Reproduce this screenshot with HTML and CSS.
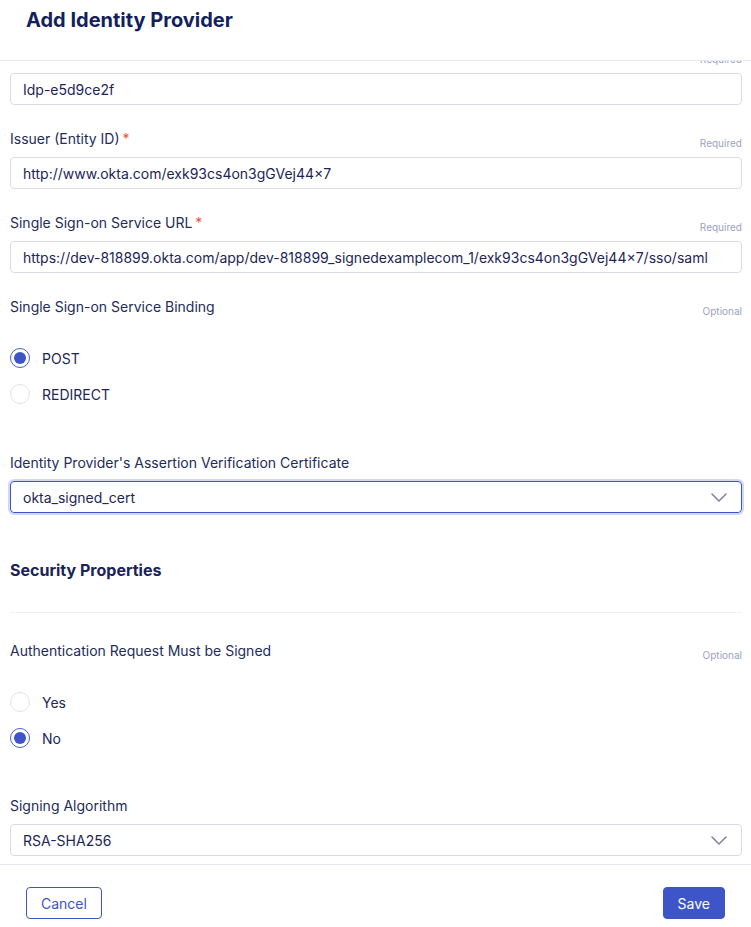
FILE: index.html
```html
<!DOCTYPE html>
<html lang="en">
<head>
<meta charset="utf-8">
<title>Add Identity Provider</title>
<link rel="stylesheet" href="styles.css">
</head>
<body>
<div class="modal">
  <header class="modal-header">
    <h1 class="title">Add Identity Provider</h1>
  </header>
  <main class="modal-body">
    <div class="scroll-content">
      <div class="field">
        <div class="field-head">
          <label class="label">Name<span class="req">*</span></label>
          <span class="hint">Required</span>
        </div>
        <div class="input">Idp-e5d9ce2f</div>
      </div>

      <div class="field">
        <div class="field-head">
          <label class="label">Issuer (Entity ID)<span class="req">*</span></label>
          <span class="hint">Required</span>
        </div>
        <div class="input">http://www.okta.com/exk93cs4on3gGVej44x7</div>
      </div>

      <div class="field">
        <div class="field-head">
          <label class="label">Single Sign-on Service URL<span class="req">*</span></label>
          <span class="hint">Required</span>
        </div>
        <div class="input">https://dev-818899.okta.com/app/dev-818899_signedexamplecom_1/exk93cs4on3gGVej44x7/sso/saml</div>
      </div>

      <div class="field">
        <div class="field-head">
          <label class="label">Single Sign-on Service Binding</label>
          <span class="hint">Optional</span>
        </div>
        <div class="radio-group">
          <div class="radio-row"><span class="radio checked"></span><span class="radio-label">POST</span></div>
          <div class="radio-row"><span class="radio"></span><span class="radio-label">REDIRECT</span></div>
        </div>
      </div>

      <div class="field field-cert">
        <div class="field-head">
          <label class="label">Identity Provider's Assertion Verification Certificate</label>
        </div>
        <div class="input select focused">
          <span>okta_signed_cert</span>
          <svg class="chevron" width="16" height="9" viewBox="0 0 16 9"><path d="M1 1l7 7 7-7" fill="none" stroke="#7c819f" stroke-width="1.5" stroke-linecap="round" stroke-linejoin="round"/></svg>
        </div>
      </div>

      <h2 class="section-title">Security Properties</h2>
      <div class="divider"></div>

      <div class="field">
        <div class="field-head">
          <label class="label">Authentication Request Must be Signed</label>
          <span class="hint">Optional</span>
        </div>
        <div class="radio-group">
          <div class="radio-row"><span class="radio"></span><span class="radio-label">Yes</span></div>
          <div class="radio-row"><span class="radio checked"></span><span class="radio-label">No</span></div>
        </div>
      </div>

      <div class="field field-alg">
        <div class="field-head">
          <label class="label">Signing Algorithm</label>
        </div>
        <div class="input select">
          <span>RSA-SHA256</span>
          <svg class="chevron" width="16" height="9" viewBox="0 0 16 9"><path d="M1 1l7 7 7-7" fill="none" stroke="#7c819f" stroke-width="1.5" stroke-linecap="round" stroke-linejoin="round"/></svg>
        </div>
      </div>
    </div>
  </main>
  <footer class="modal-footer">
    <button class="btn btn-outline">Cancel</button>
    <button class="btn btn-primary">Save</button>
  </footer>
</div>
</body>
</html>
```
FILE: styles.css
```css
* { box-sizing: border-box; }
html, body { margin: 0; padding: 0; background: #fff; }
body {
  font-family: Inter, "Noto Sans", "Liberation Sans", sans-serif;
  color: #1d2657;
}
.modal {
  display: flex;
  flex-direction: column;
  height: 927px;
  width: 751px;
}
.modal-header {
  height: 61px;
  border-bottom: 1px solid #e6e8f4;
  padding: 6px 26px 0;
  flex: none;
}
.title {
  margin: 0;
  font-size: 20px;
  line-height: 28px;
  font-weight: 700;
  color: #151f5c;
}
.modal-body {
  flex: 1;
  overflow: hidden;
  padding: 0 9px 0 10px;
}
.scroll-content {
  margin-top: -16px;
}
.field { margin-bottom: 24px; }
.field-head {
  display: flex;
  justify-content: space-between;
  align-items: flex-end;
  height: 20px;
  margin-bottom: 8px;
}
.label {
  font-size: 14px;
  line-height: 20px;
  color: #232c5c;
}
.req { color: #e5533f; margin-left: 3px; }
.hint {
  font-size: 10px;
  line-height: 13px;
  color: #9ca1bf;
  margin-bottom: -1px;
}
.input {
  height: 32px;
  border: 1px solid #d9dbea;
  border-radius: 4px;
  padding: 0 12px;
  display: flex;
  align-items: center;
  font-size: 14px;
  color: #1d2657;
  white-space: nowrap;
  overflow: hidden;
}
.select { justify-content: space-between; padding-right: 14px; }
.focused {
  border-color: #3d55c8;
  box-shadow: 0 0 0 2px #d3d8f3;
}
.chevron { flex: none; }
.radio-group {
  margin-top: 23px;
  display: flex;
  flex-direction: column;
}
.radio-row {
  height: 36px;
  display: flex;
  align-items: center;
  gap: 12px;
}
.radio {
  width: 20px;
  height: 20px;
  border-radius: 50%;
  border: 1px solid #e1e3ee;
  background: #fff;
  display: flex;
  align-items: center;
  justify-content: center;
}
.radio.checked { border: 1.5px solid #4a60cc; }
.radio.checked::after {
  content: "";
  width: 12px;
  height: 12px;
  border-radius: 50%;
  background: #3d55c8;
}
.radio-label { font-size: 14px; color: #1d2657; }
.field-cert { margin-top: 41px; }
.section-title {
  margin: 45px 0 0;
  font-size: 16px;
  line-height: 24px;
  font-weight: 700;
  color: #1a2356;
}
.divider {
  margin-top: 30px;
  height: 1px;
  background: #eef0f7;
}
.divider + .field { margin-top: 28px; }
.field-alg { margin-top: 40px; }
.modal-footer {
  flex: none;
  height: 63px;
  border-top: 1px solid #e6e8f4;
  display: flex;
  justify-content: space-between;
  align-items: flex-start;
  padding: 22px 26px 0;
}
.btn {
  height: 32px;
  border-radius: 4px;
  font-family: inherit;
  font-size: 14px;
  padding: 0 14px;
  cursor: pointer;
}
.btn-outline {
  background: #fff;
  border: 1px solid #3d55c8;
  color: #3d55c8;
}
.btn-primary {
  background: #3d55c8;
  border: 1px solid #3d55c8;
  color: #fff;
}
```
